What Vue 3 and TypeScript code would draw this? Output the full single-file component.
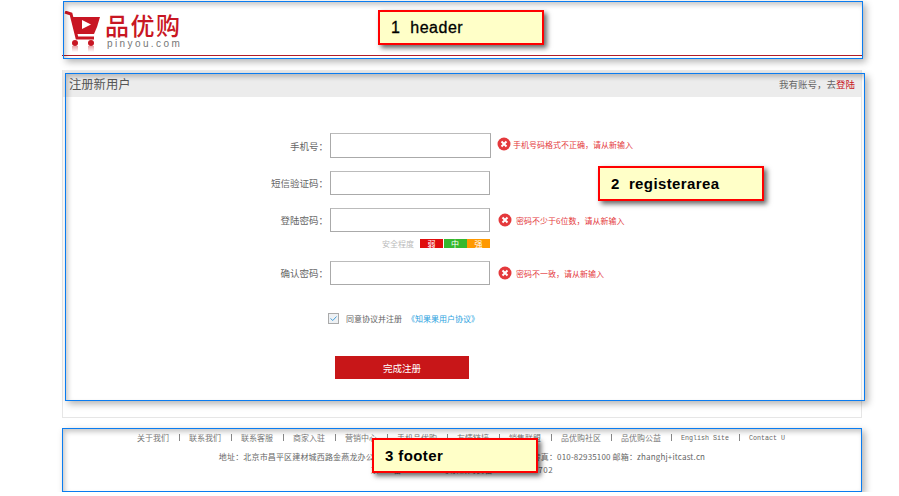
<script setup lang="ts">
interface Field {
  label: string
  error?: string
  tall?: boolean
}

const fieldsTop: Field[] = [
  { label: '手机号：', error: '手机号码格式不正确，请从新输入', tall: true },
  { label: '短信验证码：' },
  { label: '登陆密码：', error: '密码不少于6位数，请从新输入' },
]

const links: string[] = [
  '关于我们', '联系我们', '联系客服', '商家入驻', '营销中心', '手机品优购',
  '友情链接', '销售联盟', '品优购社区', '品优购公益',
]
const latinLinks: string[] = ['English Site', 'Contact U']
</script>

<template>
  <div class="page">
    <header class="site-header">
      <div class="logo">
        <svg class="cart" width="38" height="42" viewBox="0 0 38 42">
          <defs>
            <linearGradient id="fade" x1="0" y1="0" x2="0" y2="1">
              <stop offset="0" stop-color="#e9a3a8" />
              <stop offset="1" stop-color="#ffffff" />
            </linearGradient>
          </defs>
          <path d="M1 1 L7 3 L13 27 H30" fill="none" stroke="#c81623" stroke-width="3" />
          <path d="M8 6 H36 L33 16 L30 23 H12 Z" fill="#c81623" />
          <path d="M18 9 L27 13.5 L18 18 Z" fill="#ffffff" />
          <circle cx="11" cy="32" r="3" fill="#c81623" />
          <circle cx="27" cy="32" r="3" fill="#c81623" />
          <rect x="8" y="35" width="6" height="6" fill="url(#fade)" />
          <rect x="24" y="35" width="6" height="6" fill="url(#fade)" />
        </svg>
        <div class="wordmark">
          <div class="brand">品优购</div>
          <div class="domain">pinyou.com</div>
        </div>
      </div>
      <div class="frame frame-header"></div>
      <div class="note note-header">1&nbsp; header</div>
    </header>

    <section class="register">
      <div class="reg-head">
        <h3>注册新用户</h3>
        <span class="have">我有账号，去<a>登陆</a></span>
      </div>
      <form class="reg-form" @submit.prevent>
        <div v-for="f in fieldsTop" :key="f.label" class="row">
          <label>{{ f.label }}</label>
          <input class="field" :class="{ tall: f.tall }" type="text" />
          <span v-if="f.error" class="err" :class="{ near: f.tall }">
            <svg width="14" height="14" viewBox="0 0 14 14">
              <circle cx="7" cy="7" r="6.5" fill="#e4393c" />
              <path d="M4.5 4.5 L9.5 9.5 M9.5 4.5 L4.5 9.5" stroke="#fff" stroke-width="2" />
            </svg>
            {{ f.error }}
          </span>
        </div>
        <div class="strength">
          <span class="strength-label">安全程度</span>
          <span class="lvl weak">弱</span>
          <span class="lvl mid">中</span>
          <span class="lvl strong">强</span>
        </div>
        <div class="row confirm">
          <label>确认密码：</label>
          <input class="field" type="text" />
          <span class="err">
            <svg width="14" height="14" viewBox="0 0 14 14">
              <circle cx="7" cy="7" r="6.5" fill="#e4393c" />
              <path d="M4.5 4.5 L9.5 9.5 M9.5 4.5 L4.5 9.5" stroke="#fff" stroke-width="2" />
            </svg>
            密码不一致，请从新输入
          </span>
        </div>
        <div class="agree">
          <svg width="11" height="11" viewBox="0 0 11 11">
            <rect x="0.5" y="0.5" width="10" height="10" fill="#eef1f4" stroke="#aaa" />
            <path d="M2.5 5.5 L4.8 7.5 L8.5 3.5" fill="none" stroke="#4a9fd8" stroke-width="1" />
          </svg>
          <span class="agree-text">同意协议并注册</span>
          <a class="agree-link">《知果果用户协议》</a>
        </div>
        <button class="submit" type="submit">完成注册</button>
      </form>
      <div class="frame frame-register"></div>
      <div class="note note-register">2&nbsp; registerarea</div>
    </section>

    <footer class="site-footer">
      <ul class="links">
        <li v-for="l in links" :key="l">{{ l }}</li>
        <li v-for="l in latinLinks" :key="l" class="latin">{{ l }}</li>
      </ul>
      <p class="addr">地址：北京市昌平区建材城西路金燕龙办公楼一层 邮编：100096 电话：400-618-4000 传真：010-82935100 邮箱：zhanghj+itcast.cn</p>
      <p class="icp">京ICP备08001421号京公网安备110108007702</p>
      <div class="frame frame-footer"></div>
      <div class="note note-footer">3 footer</div>
    </footer>
  </div>
</template>

<style>
html, body { background: #fff; }
</style>

<style scoped>
.page {
  width: 800px;
  margin-left: 62px;
  font-family: "Noto Sans CJK SC", "Liberation Sans", sans-serif;
  color: #666;
}
.site-header {
  position: relative;
  height: 55px;
  border-bottom: 1px solid #b01c28;
  box-sizing: content-box;
}
.logo {
  display: flex;
  padding: 11px 0 0 3px;
}
.cart { flex: none; margin-left: -1px; }
.wordmark { margin-left: 3px; }
.brand {
  font-size: 24px;
  line-height: 25px;
  letter-spacing: 1.5px;
  margin-top: 1px;
  font-weight: 500;
  color: #c81623;
  white-space: nowrap;
}
.domain {
  font-family: "Liberation Sans", sans-serif;
  font-size: 10px;
  line-height: 12px;
  letter-spacing: 2.4px;
  margin: 1px 0 0 2px;
  color: #777;
}
.frame {
  position: absolute;
  border: 1px solid #0a7cf0;
  box-sizing: border-box;
  box-shadow: 3px 3px 7px rgba(0, 0, 0, 0.3), inset 2px 3px 5px rgba(0, 0, 0, 0.22);
  pointer-events: none;
}
.frame-header { left: 1px; top: 1px; width: 800px; height: 58px; }
.frame-register { left: 2px; top: 3px; width: 800px; height: 328px; }
.frame-footer { left: 0; top: 0; width: 800px; height: 64px; }
.note {
  position: absolute;
  box-sizing: border-box;
  width: 166px;
  height: 35px;
  padding-left: 11px;
  background: #ffffc8;
  border: 2px solid #f00;
  box-shadow: 3px 3px 5px rgba(0, 0, 0, 0.6);
  font-family: "Liberation Sans", sans-serif;
  font-size: 16px;
  line-height: 31px;
  letter-spacing: 0.5px;
  -webkit-text-stroke: 0.3px #000;
  color: #000;
  text-align: left;
  white-space: nowrap;
}
.note-header { left: 316px; top: 10px; }
.note-register { left: 535px; top: 96px; font-weight: 700; font-size: 15px; letter-spacing: 0.4px; -webkit-text-stroke: 0; }
.note-footer { left: 310px; top: 10px; font-weight: 700; font-size: 15px; letter-spacing: 0.4px; -webkit-text-stroke: 0; }

.register {
  position: relative;
  margin-top: 14px;
  height: 348px;
  box-sizing: border-box;
  border: 1px solid #e6e6e6;
  border-top: 0;
}
.reg-head {
  display: flex;
  justify-content: space-between;
  align-items: center;
  height: 27px;
  padding: 0 6px 0 6px;
  background: #ececec;
}
.reg-head h3 {
  margin: 0;
  font-size: 12.3px;
  font-weight: 400;
  color: #555;
}
.have { font-size: 9.5px; color: #666; }
.have a { color: #c81623; }
.reg-form {
  padding-top: 36px;
  display: flex;
  flex-direction: column;
}
.row {
  display: flex;
  align-items: center;
  margin-bottom: 13px;
}
.row label {
  width: 265px;
  text-align: right;
  font-size: 9.5px;
  color: #666;
  flex: none;
}
.field {
  flex: none;
  width: 160px;
  height: 24px;
  margin: 0 0 0 2px;
  padding: 0;
  box-sizing: border-box;
  border: 1px solid #aaa;
  border-top-color: #bbb;
  background: #fff;
}
.field.tall { width: 161px; height: 25px; }
.err {
  display: inline-flex;
  align-items: center;
  gap: 4px;
  margin-left: 8px;
  font-size: 8px;
  color: #e4393c;
  white-space: nowrap;
}
.err.near { margin-left: 6px; margin-bottom: 3px; gap: 2px; }
.strength {
  display: flex;
  align-items: center;
  height: 9px;
  margin: -6px 0 13px 319px;
  font-size: 8px;
}
.strength-label { color: #bbb; margin-right: 7px; width: 31px; white-space: nowrap; }
.lvl {
  width: 23px;
  height: 9px;
  margin-right: 0.5px;
  line-height: 9px;
  text-align: center;
  color: #fff;
}
.weak { background: #e00d0d; }
.mid { background: #36b82e; }
.strong { background: #ff9900; }
.row.confirm { margin-bottom: 0; }
.agree {
  display: flex;
  align-items: center;
  height: 11px;
  margin: 28px 0 0 265px;
  font-size: 8px;
  white-space: nowrap;
}
.agree-text { margin-left: 7px; color: #666; }
.agree-link { margin-left: 5px; color: #2a9fe0; }
.submit {
  width: 134px;
  height: 23px;
  margin: 32px 0 0 272px;
  padding: 0;
  border: 0;
  background: #c81618;
  color: #fff;
  font-family: inherit;
  font-size: 9.5px;
}

.site-footer {
  position: relative;
  margin-top: 10px;
  height: 64px;
  text-align: center;
}
.links {
  list-style: none;
  display: flex;
  margin: 0;
  padding: 3px 0 0 65px;
  font-size: 8px;
  line-height: 14px;
  color: #777;
}
.links li {
  padding: 0 10px;
  position: relative;
  white-space: nowrap;
}
.links li + li::before {
  content: "";
  position: absolute;
  left: 0;
  top: 3px;
  width: 1px;
  height: 7px;
  background: #888;
}
.links .latin {
  font-family: "Liberation Mono", monospace;
  font-size: 6.67px;
  color: #666;
}
.addr {
  margin: 6px 0 0;
  font-size: 8px;
  line-height: 12px;
  letter-spacing: 0.16px;
  white-space: nowrap;
}
.icp {
  margin: 2px 0 0;
  font-size: 8px;
  line-height: 10px;
  letter-spacing: 0.55px;
}
</style>
